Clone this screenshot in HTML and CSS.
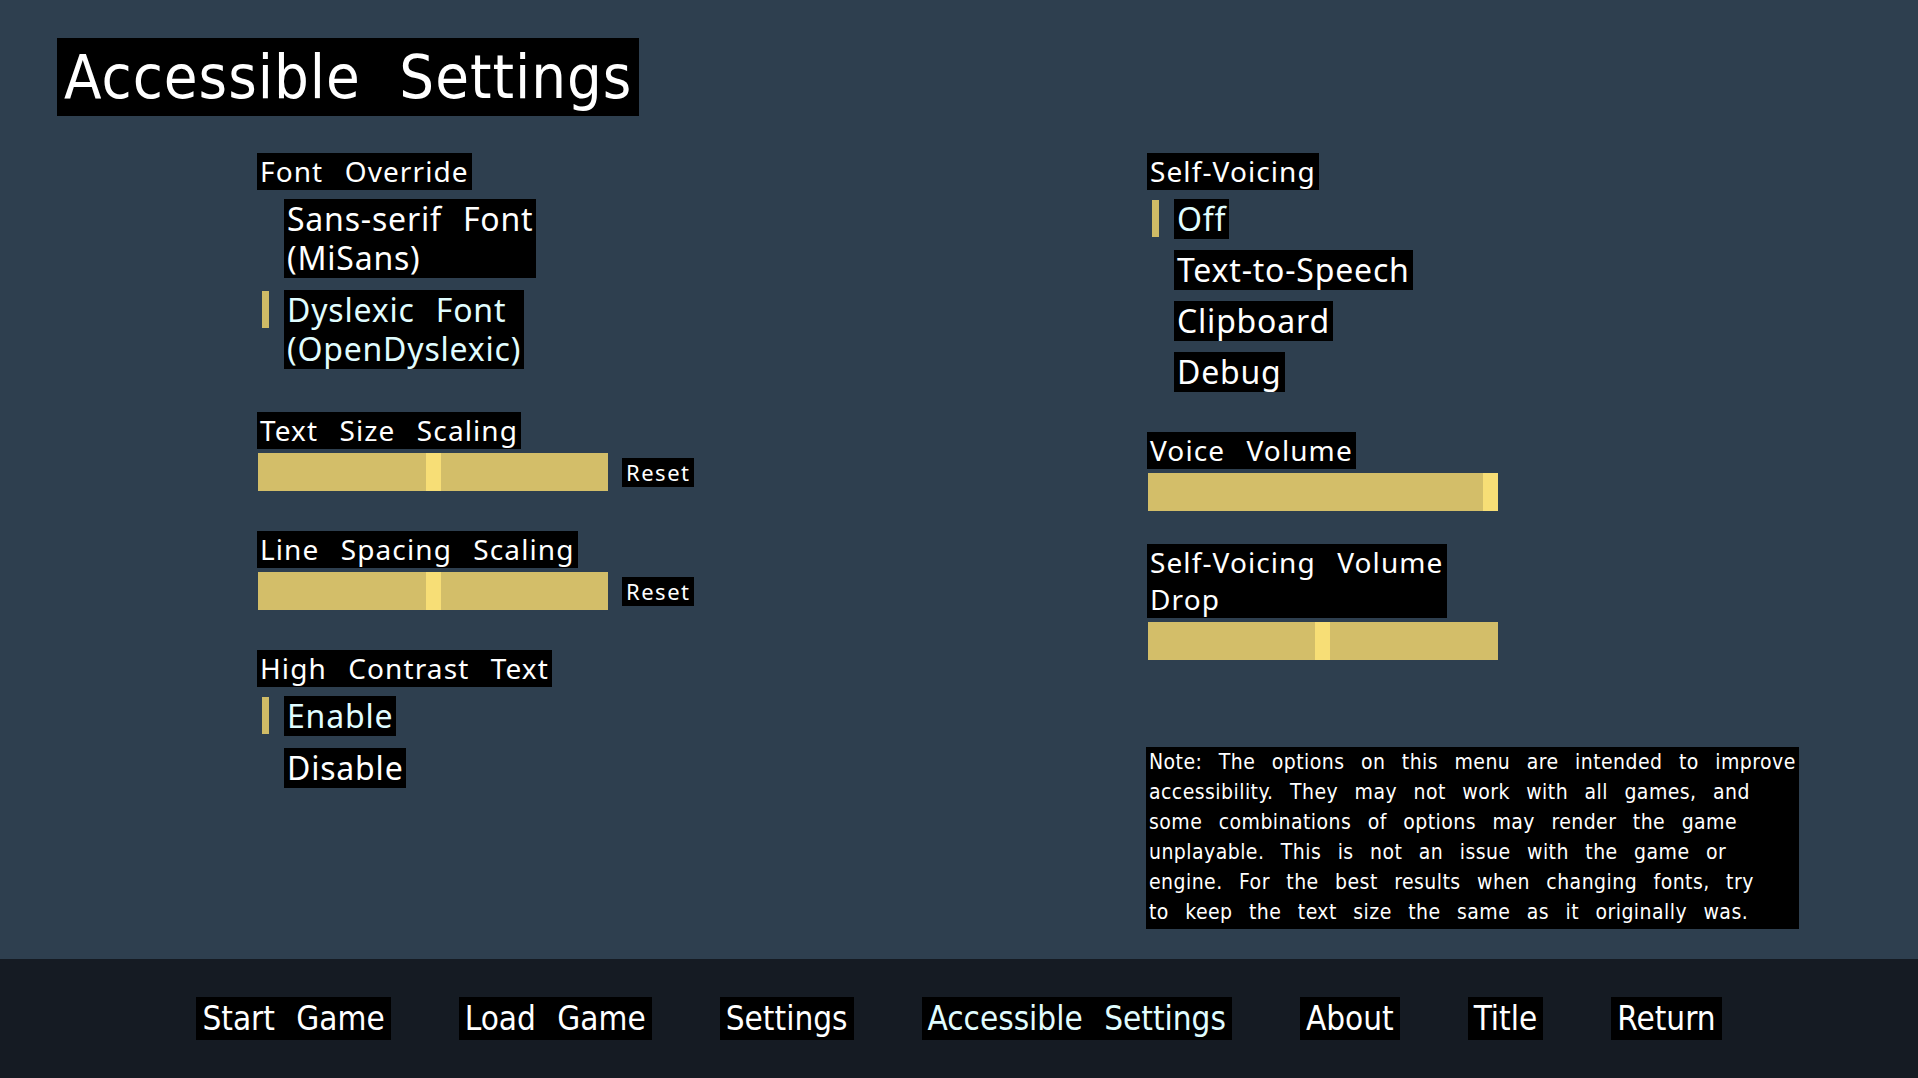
FILE: index.html
```html
<!DOCTYPE html>
<html lang="en">
<head>
    <meta charset="UTF-8">
    <meta name="viewport" content="width=device-width, initial-scale=1.0">
    <title>Accessible Settings</title>
    <link rel="stylesheet" href="styles.css">
</head>
<body>
    <div class="screen">
        <div class="main">
            <h1 class="title">Accessible Settings</h1>

            <div class="settings">
                <!-- Left column -->
                <div class="column">
                    <div class="pref">
                        <div class="label">Font Override</div>
                        <div class="choices">
                            <div class="choice">Sans-serif Font<br>(MiSans)</div>
                            <div class="choice selected">Dyslexic Font<br>(OpenDyslexic)</div>
                        </div>
                    </div>

                    <div class="pref gap-wide">
                        <div class="label">Text Size Scaling</div>
                        <div class="slider-row">
                            <div class="bar"><span class="thumb" style="left: 168px"></span></div>
                            <div class="reset">Reset</div>
                        </div>
                    </div>

                    <div class="pref">
                        <div class="label">Line Spacing Scaling</div>
                        <div class="slider-row">
                            <div class="bar"><span class="thumb" style="left: 168px"></span></div>
                            <div class="reset">Reset</div>
                        </div>
                    </div>

                    <div class="pref">
                        <div class="label">High Contrast Text</div>
                        <div class="choices">
                            <div class="choice selected">Enable</div>
                            <div class="choice">Disable</div>
                        </div>
                    </div>
                </div>

                <!-- Right column -->
                <div class="column">
                    <div class="pref">
                        <div class="label">Self-Voicing</div>
                        <div class="choices tight">
                            <div class="choice selected">Off</div>
                            <div class="choice">Text-to-Speech</div>
                            <div class="choice">Clipboard</div>
                            <div class="choice">Debug</div>
                        </div>
                    </div>

                    <div class="pref">
                        <div class="label">Voice Volume</div>
                        <div class="slider-row">
                            <div class="bar"><span class="thumb" style="left: 335px"></span></div>
                        </div>
                    </div>

                    <div class="pref gap-short">
                        <div class="label">Self-Voicing Volume<br>Drop</div>
                        <div class="slider-row">
                            <div class="bar"><span class="thumb" style="left: 167px"></span></div>
                        </div>
                    </div>

                    <p class="note">Note: The options on this menu are intended to improve<br>accessibility. They may not work with all games, and<br>some combinations of options may render the game<br>unplayable. This is not an issue with the game or<br>engine. For the best results when changing fonts, try<br>to keep the text size the same as it originally was.</p>
                </div>
            </div>
        </div>

        <nav class="nav">
            <a class="nav-btn">Start Game</a>
            <a class="nav-btn">Load Game</a>
            <a class="nav-btn">Settings</a>
            <a class="nav-btn selected">Accessible Settings</a>
            <a class="nav-btn">About</a>
            <a class="nav-btn">Title</a>
            <a class="nav-btn">Return</a>
        </nav>
    </div>
</body>
</html>
```

FILE: styles.css
```css
body {
    margin: 0;
    background-color: #2e3f4f;
    font-family: 'Noto Sans', 'Open Sans', sans-serif;
    color: #fff;
    overflow: hidden;
}

.screen {
    height: 100vh;
    display: flex;
    flex-direction: column;
}

.main {
    flex: 1;
    padding: 38px 0 0 57px;
}

.title {
    display: inline-block;
    margin: 0;
    padding: 0 7px;
    background-color: #000;
    font-family: 'DejaVu Sans Condensed', 'DejaVu Sans', sans-serif;
    font-stretch: condensed;
    font-weight: normal;
    font-size: 61px;
    line-height: 78px;
    word-spacing: 20px;
    letter-spacing: 1px;
}

.settings {
    display: grid;
    grid-template-columns: 890px 1fr;
    margin: 37px 0 0 200px;
}

.column {
    display: flex;
    flex-direction: column;
    align-items: flex-start;
}

.pref {
    display: flex;
    flex-direction: column;
    align-items: flex-start;
    margin-top: 40px;
}

.pref:first-child {
    margin-top: 0;
}

.pref.gap-wide {
    margin-top: 43px;
}

.pref.gap-short {
    margin-top: 33px;
}

.label {
    background-color: #000;
    font-size: 28px;
    line-height: 37px;
    padding: 0 3px;
    word-spacing: 13px;
    letter-spacing: 1.1px;
}

/* Radio style choices */
.choices {
    display: flex;
    flex-direction: column;
    align-items: flex-start;
    gap: 12px;
    margin-top: 9px;
    padding-left: 27px;
}

.choices.tight {
    gap: 11px;
}

.choice {
    position: relative;
    background-color: #000;
    font-size: 32px;
    line-height: 39px;
    padding: 0 3px 1px;
    word-spacing: 12px;
    letter-spacing: 0.8px;
}

.choice.selected {
    color: #e0fdff;
}

.choice.selected::before {
    content: "";
    position: absolute;
    left: -22px;
    top: 1px;
    width: 7px;
    height: 37px;
    background-color: #cfbb66;
}

/* Sliders */
.slider-row {
    display: flex;
    align-items: center;
    gap: 14px;
    margin-top: 4px;
    padding-left: 1px;
}

.bar {
    position: relative;
    width: 350px;
    height: 38px;
    background-color: #d3be69;
}

.thumb {
    position: absolute;
    top: 0;
    width: 15px;
    height: 38px;
    background-color: #f7de76;
}

.reset {
    background-color: #000;
    font-size: 22px;
    line-height: 29px;
    padding: 0 4px;
    letter-spacing: 1.5px;
}

.note {
    margin: 87px 0 0 -1px;
    padding: 0 3px 2px;
    background-color: #000;
    font-family: 'DejaVu Sans Condensed', 'DejaVu Sans', sans-serif;
    font-stretch: condensed;
    font-size: 21px;
    line-height: 30px;
    word-spacing: 10px;
    letter-spacing: 0.45px;
}

/* Bottom navigation */
.nav {
    height: 119px;
    background-color: #151b23;
    display: flex;
    justify-content: center;
    align-items: center;
    gap: 68px;
}

.nav-btn {
    background-color: #000;
    color: #fff;
    font-family: 'DejaVu Sans Condensed', 'DejaVu Sans', sans-serif;
    font-stretch: condensed;
    font-size: 33px;
    line-height: 43px;
    padding: 0 6px;
    word-spacing: 12px;
    cursor: pointer;
}

.nav-btn.selected {
    color: #e0fdff;
}
```
